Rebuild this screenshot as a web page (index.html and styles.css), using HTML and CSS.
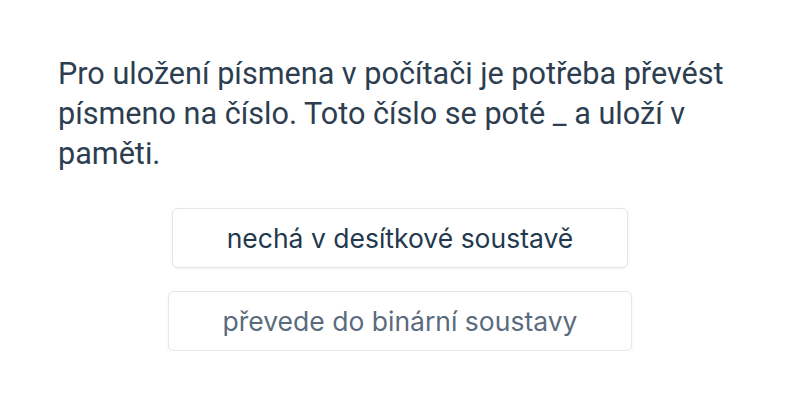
FILE: index.html
```html
<!DOCTYPE html>
<html lang="cs">
<head>
<meta charset="utf-8">
<link rel="stylesheet" href="styles.css">
</head>
<body>
<main class="quiz">
  <p class="question">Pro uložení písmena v počítači je potřeba převést písmeno na číslo. Toto číslo se poté _ a uloží v paměti.</p>
  <div class="options">
    <button class="option option-first">nechá v desítkové soustavě</button>
    <button class="option option-second">převede do binární soustavy</button>
  </div>
</main>
</body>
</html>
```
FILE: styles.css
```css
html, body {
  margin: 0;
  padding: 0;
  background: #ffffff;
}
.quiz {
  padding: 54px 58px 0 58px;
}
.question {
  margin: 0;
  width: 690px;
  font-family: Roboto, "Liberation Sans", sans-serif;
  font-size: 30.6px;
  line-height: 40px;
  color: #2c3e50;
}
.options {
  display: flex;
  flex-direction: column;
  align-items: center;
  gap: 23px;
  margin-top: 34px;
  margin-left: -58px;
  margin-right: -58px;
}
.option {
  font-family: Inter, "Liberation Sans", sans-serif;
  font-size: 26.5px;
  height: 60px;
  padding: 0 54px;
  background: #ffffff;
  border: 1px solid #e4e6e8;
  border-radius: 6px;
  box-shadow: 0 1px 3px rgba(0, 0, 0, 0.06);
}
.option-first {
  color: #22384d;
}
.option-second {
  color: #5a6b7e;
}
```
